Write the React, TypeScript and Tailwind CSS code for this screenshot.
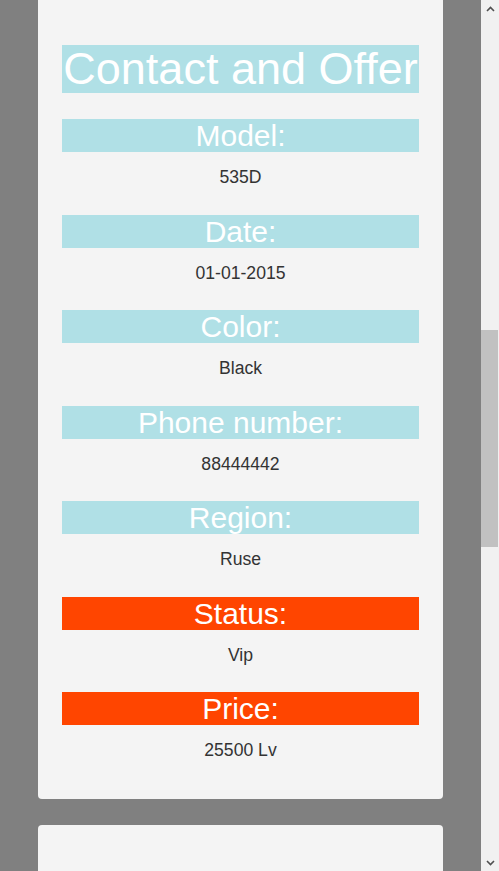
const sections = [
  { label: 'Model:', value: '535D', vip: false },
  { label: 'Date:', value: '01-01-2015', vip: false },
  { label: 'Color:', value: 'Black', vip: false },
  { label: 'Phone number:', value: '88444442', vip: false },
  { label: 'Region:', value: 'Ruse', vip: false },
  { label: 'Status:', value: 'Vip', vip: true },
  { label: 'Price:', value: '25500 Lv', vip: true },
];

function ScrollBar() {
  return (
    <div className="w-[18px] h-full bg-[#f1f1f1] flex flex-col shrink-0">
      <div className="h-[17px] flex items-center justify-center">
        <svg width="9" height="6" viewBox="0 0 9 6">
          <polyline points="1,5 4.5,1.5 8,5" fill="none" stroke="#505050" strokeWidth="1.6" />
        </svg>
      </div>
      <div className="h-[313px]" />
      <div className="h-[217px] bg-[#c1c1c1] mr-[1px]" />
      <div className="flex-1" />
      <div className="h-[17px] flex items-center justify-center">
        <svg width="9" height="6" viewBox="0 0 9 6">
          <polyline points="1,1 4.5,4.5 8,1" fill="none" stroke="#505050" strokeWidth="1.6" />
        </svg>
      </div>
    </div>
  );
}

export default function App() {
  return (
    <div
      className="h-[871px] w-full flex overflow-hidden bg-[#808080]"
      style={{ fontFamily: '"Liberation Sans", Arial, sans-serif' }}
    >
      <div className="flex-1 px-[38px]">
        <div className="-mt-[20px] pt-[65px] pb-[11.5px] px-[24px] bg-[#f4f4f4] rounded-[4px] text-center">
          <h1 className="h-[48px] bg-[#b0e0e6] text-white text-[45px] leading-[48px] whitespace-nowrap mb-[26px]">
            Contact and Offer
          </h1>
          {sections.map((s) => (
            <div key={s.label} className="mb-[27.5px]">
              <h2
                className={`h-[33px] text-white text-[30px] leading-[33px] ${
                  s.vip ? 'bg-[#ff4500]' : 'bg-[#b0e0e6]'
                }`}
              >
                {s.label}
              </h2>
              <p className="mt-[15px] text-[17.6px] leading-[20px] text-[#333]">{s.value}</p>
            </div>
          ))}
        </div>
        <div className="mt-[26px] h-[200px] bg-[#f4f4f4] rounded-[4px]" />
      </div>
      <ScrollBar />
    </div>
  );
}
